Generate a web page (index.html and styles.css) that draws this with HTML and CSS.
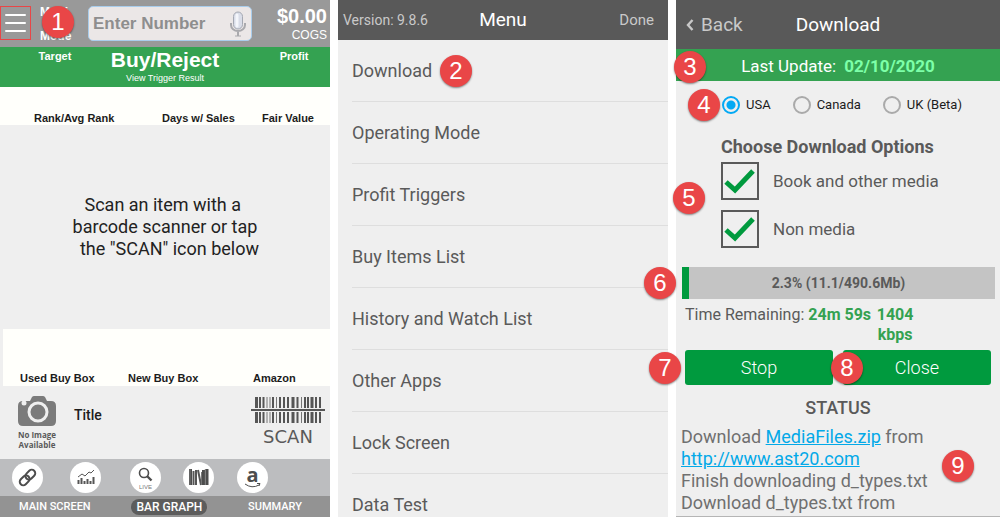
FILE: index.html
```html
<!DOCTYPE html>
<html lang="en">
<head>
<meta charset="utf-8">
<title>Scouting app: download guide</title>
<meta name="viewport" content="width=device-width, initial-scale=1">
<link rel="stylesheet" href="styles.css">
</head>
<body>
<main class="guide">
  <section class="screen scan">
    <header class="topbar">
      <button class="menu-button" type="button" aria-label="Menu"><span></span><span></span><span></span></button>
      <div class="mode"><span>Multi</span><span>Mode</span><b class="badge badge-1">1</b></div>
      <div class="search">
        <input class="search-input" type="text" placeholder="Enter Number" aria-label="Enter Number">
        <svg class="mic" viewBox="0 0 16 26" aria-hidden="true">
          <path d="M1 12v2a7 6 0 0 0 14 0v-2M8 20v5" fill="none" stroke="#a9a9ad" stroke-width="2"/>
          <rect x="3.500" y="1" width="9" height="17" rx="4.500" fill="#d9dde8" stroke="#a4a8b2"/>
          <path d="M7 4v11" stroke="#f4f6fb" stroke-width="3" stroke-linecap="round"/>
          <path d="M5 25h6" stroke="#a9a9ad" stroke-width="1"/>
        </svg>
      </div>
      <div class="cost"><strong>$0.00</strong><span>COGS</span></div>
    </header>
    <div class="verdict">
      <span class="verdict-side">Target</span>
      <div class="verdict-main"><strong>Buy/Reject</strong><span>View Trigger Result</span></div>
      <span class="verdict-side verdict-profit">Profit</span>
    </div>
    <div class="labels labels-top"><span>Rank/Avg Rank</span><span>Days w/ Sales</span><span>Fair Value</span></div>
    <p class="prompt">Scan an item with a&nbsp;<br>barcode scanner or tap<br>&nbsp; the "SCAN" icon below</p>
    <div class="labels labels-bottom"><span>Used Buy Box</span><span>New Buy Box</span><span>Amazon</span></div>
    <div class="product">
      <div class="no-image">
        <svg viewBox="0 0 38 30" width="38" height="30" aria-hidden="true">
          <path d="M5 5h7l2-4q1-1 2-1h9q1 0 2 1l2 4h4q5 0 5 5v15q0 5-5 5H5q-5 0-5-5V10q0-5 5-5z" fill="#7b7b7b"/>
          <circle cx="20" cy="16" r="9" fill="#7b7b7b" stroke="#efefef" stroke-width="3"/>
          <circle cx="6" cy="7" r="2.500" fill="#efefef"/>
        </svg>
        <span>No Image<br>Available</span>
      </div>
      <span class="product-title">Title</span>
      <button class="scan-button" type="button">
        <svg viewBox="0 0 74 28" width="74" height="28" aria-hidden="true">
          <path d="M5.500 1v26M42 1v26M61 1v26" stroke="#555" stroke-width="3"/>
          <path d="M9 1v26M12.500 1v26M22 1v26M29 1v26M33 1v26M37 1v26M46.500 1v26M54 1v26M57 1v26M65 1v26M69 1v26" stroke="#555" stroke-width="2"/>
          <path d="M16 1v26M19 1v26M25.500 1v26M50.500 1v26" stroke="#777" stroke-width="1"/>
          <path d="M0 14h74" stroke="#efefef" stroke-width="4"/>
          <path d="M0 14h74" stroke="#555" stroke-width="2"/>
        </svg>
        <span>SCAN</span>
      </button>
    </div>
    <nav class="tools">
      <button class="tool" type="button" aria-label="Link">
        <svg viewBox="0 0 31 31"><g fill="none" stroke="#4d4d4d" stroke-width="2" transform="rotate(-45 15.500 15.500)"><rect x="6" y="12" width="11" height="7" rx="3.500"/><rect x="14" y="12" width="11" height="7" rx="3.500"/></g></svg>
      </button>
      <button class="tool" type="button" aria-label="Charts">
        <svg viewBox="0 0 31 31"><path d="M8 15l4-3 3 2 4-4 2 1 3-3" fill="none" stroke="#555" stroke-width="1"/><path d="M8.500 22v-4M11.500 22v-6M14.500 22v-3M17.500 22v-5M20.500 22v-3M23.500 22v-7" stroke="#555" stroke-width="2"/></svg>
      </button>
      <button class="tool" type="button" aria-label="Live search">
        <svg viewBox="0 0 31 31"><circle cx="14" cy="11" r="4.500" fill="none" stroke="#4d4d4d" stroke-width="1.600"/><path d="M17 14l4.500 4.500" stroke="#4d4d4d" stroke-width="2.400"/><text x="15.500" y="27" text-anchor="middle" class="live">LIVE</text></svg>
      </button>
      <button class="tool" type="button" aria-label="Books">
        <svg viewBox="0 0 31 31"><path d="M7.500 7v16M20.500 8v15M24 7v16" stroke="#4d4d4d" stroke-width="3"/><path d="M10.500 9v14M13 8v15M15 8l3 15" stroke="#555" stroke-width="2"/><path d="M18.500 10v13M7 7v16M22.300 7v16" stroke="#777" stroke-width="1"/></svg>
      </button>
      <button class="tool" type="button" aria-label="Amazon">
        <svg viewBox="0 0 31 31"><text x="15.500" y="20" text-anchor="middle" class="letter">a</text><path d="M8 22q7 5 14 1M20 21.500l3 0-1 2.500" fill="none" stroke="#4d4d4d" stroke-width="1"/></svg>
      </button>
    </nav>
    <nav class="tabs">
      <a href="#main">MAIN SCREEN</a>
      <a href="#graph" class="active" aria-current="page">BAR GRAPH</a>
      <a href="#summary">SUMMARY</a>
    </nav>
  </section>

  <section class="screen menu">
    <header class="bar menu-bar"><span class="version">Version: 9.8.6</span><h1>Menu</h1><button type="button">Done</button></header>
    <ul class="menu-list">
      <li><a href="#download">Download</a><b class="badge badge-2">2</b></li>
      <li><a href="#operating">Operating Mode</a></li>
      <li><a href="#triggers">Profit Triggers</a></li>
      <li><a href="#buy">Buy Items List</a></li>
      <li><a href="#history">History and Watch List</a></li>
      <li><a href="#apps">Other Apps</a></li>
      <li><a href="#lock">Lock Screen</a></li>
      <li><a href="#data">Data Test</a></li>
    </ul>
  </section>

  <section class="screen download">
    <header class="bar download-bar">
      <button type="button"><svg viewBox="0 0 8 12" width="8" height="12" aria-hidden="true"><path d="M6.500 1L2 6l4.500 5" fill="none" stroke="#c9c9c9" stroke-width="2.400"/></svg>Back</button>
      <h1>Download</h1>
    </header>
    <div class="update"><b class="badge badge-3">3</b><span>Last Update:</span><time datetime="2020-02-10">02/10/2020</time></div>
    <div class="countries" role="radiogroup" aria-label="Country">
      <b class="badge badge-4">4</b>
      <label><input type="radio" name="country" checked>USA</label>
      <label><input type="radio" name="country">Canada</label>
      <label><input type="radio" name="country">UK (Beta)</label>
    </div>
    <div class="options">
      <b class="badge badge-5">5</b>
      <h2>Choose Download Options</h2>
      <label><span class="tick"><input type="checkbox" checked><svg viewBox="0 0 38 38" aria-hidden="true"><path d="M5 20l9 8L32 9" fill="none" stroke="#009a3e" stroke-width="5"/></svg></span>Book and other media</label>
      <label><span class="tick"><input type="checkbox" checked><svg viewBox="0 0 38 38" aria-hidden="true"><path d="M5 20l9 8L32 9" fill="none" stroke="#009a3e" stroke-width="5"/></svg></span>Non media</label>
    </div>
    <div class="progress" role="progressbar" aria-valuenow="2.3" aria-label="Download progress"><b class="badge badge-6">6</b><i class="progress-fill" style="width:2.3%"></i><span>2.3% (11.1/490.6Mb)</span></div>
    <div class="remaining"><span>Time Remaining: <strong>24m 59s</strong></span><strong class="speed">1404 kbps</strong></div>
    <div class="actions"><b class="badge badge-7">7</b><button type="button">Stop</button><b class="badge badge-8">8</b><button type="button">Close</button></div>
    <div class="status">
      <h2>STATUS</h2>
      <b class="badge badge-9">9</b>
      <p>Download <a href="#media">MediaFiles.zip</a> from<br><a href="#site">http://www.ast20.com</a><br>Finish downloading d_types.txt<br>Download d_types.txt from</p>
    </div>
  </section>
</main>
</body>
</html>
```
FILE: styles.css
```css
* { box-sizing: border-box; }
body { margin: 0; background: #fff; font-family: Roboto, "Liberation Sans", sans-serif; color: #5a5a5a; }
button { border: 0; padding: 0; background: none; font: inherit; color: inherit; cursor: pointer; }
a { color: inherit; text-decoration: none; }
h1, h2, p, ul { margin: 0; padding: 0; }
h1, h2 { font-weight: 500; }

.guide { display: grid; grid-template-columns: 330fr 330fr 324fr; grid-template-rows: minmax(0, 1fr); gap: 8px; height: 100vh; overflow: hidden; }
.screen { display: flex; flex-direction: column; min-width: 0; min-height: 0; background: #efefef; }
.screen > * { flex-shrink: 0; }

.badge { position: absolute; z-index: 2; width: 32px; height: 32px; border-radius: 50%; background: #e94647; color: #fff; font: 400 24px/32px "Liberation Sans", sans-serif; text-align: center; box-shadow: 0 1px 2px rgba(0, 0, 0, .45); }
.badge-1 { left: 3px; top: 6px; }
.badge-2 { left: 88px; top: 15px; }
.badge-3 { left: -2px; top: 2px; }
.badge-4 { left: 12px; top: 8px; }
.badge-5 { left: -3px; top: 53px; }
.badge-6 { left: -38px; top: 0; }
.badge-7 { left: -36px; top: 2px; }
.badge-8 { left: 146px; top: 2px; }
.badge-9 { right: 26px; top: 65px; }

/* Scan screen */
.scan { font-family: "Liberation Sans", sans-serif; }
.topbar { display: flex; height: 47px; background: #999; color: #fff; }
.menu-button { display: flex; flex: none; flex-direction: column; justify-content: center; gap: 6px; width: 31px; height: 34px; margin-top: 6px; padding: 0 4px; border: 1px solid #e94647; }
.menu-button span { height: 2px; border-radius: 1px; background: #fff; }
.mode { position: relative; display: flex; flex: none; flex-direction: column; gap: 11px; width: 49px; margin-left: 8px; padding: 6px 0 0 1px; font: 700 12px/13px "Liberation Sans", sans-serif; }
.search { display: flex; align-items: center; flex: 1; min-width: 0; height: 35px; margin-top: 6px; padding: 0 5px 0 4px; border: 1px solid #a9cdec; border-radius: 5px; background: #ebe7e7; }
.search-input { flex: 1; min-width: 0; border: 0; padding: 0; background: none; font: 700 17px/20px "Liberation Sans", sans-serif; }
.search-input::placeholder { color: #8e8e8e; opacity: 1; }
.mic { flex: none; width: 16px; height: 26px; }
.cost { display: flex; flex: none; flex-direction: column; align-items: flex-end; width: 78px; padding: 6px 3px 0 0; font-size: 12px; line-height: 16px; }
.cost strong { font-size: 20px; line-height: 21px; }
.verdict { display: grid; grid-template-columns: 110px 1fr 110px; height: 40px; background: #34a251; color: #fff; text-align: center; }
.verdict-side { padding-top: 3px; font: 700 11px/13px "Liberation Sans", sans-serif; }
.verdict-profit { padding-left: 38px; }
.verdict-main { display: flex; flex-direction: column; font-size: 9px; line-height: 12px; white-space: nowrap; }
.verdict-main strong { font-size: 21px; line-height: 25px; }
.labels { display: grid; align-items: end; background: #fffffb; color: #1c1c1c; font: 700 11px/14px "Liberation Sans", sans-serif; white-space: nowrap; }
.labels-top { grid-template-columns: 128fr 100fr 68fr; height: 38px; padding-left: 34px; }
.labels-bottom { grid-template-columns: 108fr 125fr 77fr; height: 57px; margin-left: 3px; padding: 0 0 1px 17px; }
.prompt { display: grid; place-content: center; flex: 1; font: 400 18px/22px Roboto, sans-serif; text-align: center; color: #222; }
.product { display: flex; align-items: flex-start; height: 73px; padding: 10px 5px 0 18px; }
.no-image { display: flex; flex-direction: column; align-items: center; gap: 4px; width: 38px; font: 700 8px/10px "Open Sans", sans-serif; white-space: nowrap; text-align: center; }
.product-title { flex: 1; padding: 9px 0 0 18px; font: 500 14px/20px Roboto, sans-serif; color: #1c1c1c; }
.scan-button { display: flex; flex-direction: column; align-items: center; gap: 2px; font: 400 18px/22px "DejaVu Sans", sans-serif; color: #5a5a5a; }
.tools { display: flex; height: 37px; padding: 3px 62px 0 12px; justify-content: space-between; background: #bcbdbf; }
.tool { width: 31px; height: 31px; border-radius: 50%; background: #fff; }
.tool:nth-child(2) { margin-left: 4px; }
.tool:nth-child(3) { margin-left: 6px; }
.tool svg { display: block; width: 31px; height: 31px; }
.live { font: 400 6px "Liberation Sans", sans-serif; fill: #777; }
.letter { font: 700 20px "Open Sans", sans-serif; fill: #4d4d4d; }
.tabs { display: flex; align-items: center; justify-content: space-between; height: 21px; padding: 0 28px 0 19px; background: #939393; color: #fff; font: 500 11px/16px Roboto, sans-serif; }
.tabs .active { padding: 0 5px; border-radius: 8px; background: #5c5c5c; font-size: 12px; }

/* Shared title bars */
.bar { display: grid; align-items: center; background: #595959; color: #fff; }
.bar h1 { font-size: 19px; line-height: 24px; font-weight: 400; text-align: center; }
.bar button { color: #c9c9c9; }

/* Menu screen */
.menu-bar { grid-template-columns: 1fr auto 1fr; height: 40px; }
.menu-bar button { justify-self: end; padding-right: 14px; font-size: 15px; line-height: 20px; }
.version { padding-left: 5px; font-size: 14px; line-height: 20px; color: #c9c9c9; }
.screen > .menu-list { flex: 1; list-style: none; min-height: 0; overflow: hidden; padding-left: 14px; }
.menu-list li { position: relative; height: 62px; border-bottom: 1px solid #dedede; }
.menu-list a { display: block; padding: 20px 0; font-size: 18px; line-height: 22px; }

/* Download screen */
.download-bar { grid-template-columns: 1fr auto 1fr; height: 49px; padding: 0 10px; }
.download-bar button { display: flex; align-items: center; gap: 7px; justify-self: start; font-size: 19px; line-height: 24px; }
.update { position: relative; display: flex; justify-content: center; gap: 8px; height: 32px; background: #34a251; color: #fff; font-size: 17px; line-height: 34px; }
.update time { color: #7dffa8; font-weight: 700; }
.countries { position: relative; display: flex; gap: 22px; height: 48px; padding: 0 0 0 46px; align-items: center; color: #1c1c1c; font-size: 13px; line-height: 18px; }
.countries label { display: flex; align-items: center; gap: 6px; }
.countries input { appearance: none; width: 18px; height: 18px; margin: 0; border: 2px solid #aaa; border-radius: 50%; }
.countries input:checked { border-color: #03a9f4; background: radial-gradient(circle, #03a9f4 4px, transparent 5px); }
.options { position: relative; display: flex; flex-direction: column; gap: 10px; padding: 5px 0 0 45px; }
.options h2 { margin-bottom: -8px; font-size: 18px; line-height: 26px; font-weight: 700; }
.options label { display: flex; align-items: center; gap: 14px; font-size: 17px; line-height: 24px; }
.tick { display: grid; width: 38px; height: 38px; }
.tick input, .tick svg { grid-area: 1 / 1; width: 38px; height: 38px; margin: 0; }
.tick input { appearance: none; border: 2px solid #5a5a5a; }
.tick svg { pointer-events: none; }
.progress { position: relative; display: grid; height: 32px; margin: 19px 5px 0 6px; background: #c4c4c4; font-size: 14px; font-weight: 700; line-height: 32px; text-align: center; }
.progress-fill, .progress > span { grid-area: 1 / 1; }
.progress-fill { background: #009a3e; }
.remaining { display: flex; gap: 4px; padding: 6px 9px 0; font-size: 16px; line-height: 20px; }
.remaining strong { color: #34a251; }
.speed { width: 40px; text-align: center; }
.actions { position: relative; display: grid; grid-template-columns: 1fr 1fr; gap: 10px; margin: 5px 9px 0; }
.actions button { height: 35px; border-radius: 3px; background: #009a3e; color: #fff; font-size: 18px; line-height: 24px; font-weight: 300; }
.screen > .status { position: relative; flex: 1; padding: 12px 5px 0; min-height: 0; border-bottom: 1px solid #b5b5b5; }
.status h2 { font-size: 18px; line-height: 22px; text-align: center; }
.status p { padding-top: 7px; color: #707070; font-size: 18px; line-height: 22px; white-space: nowrap; }
.status a { color: #03a9e8; text-decoration: underline; }
```
